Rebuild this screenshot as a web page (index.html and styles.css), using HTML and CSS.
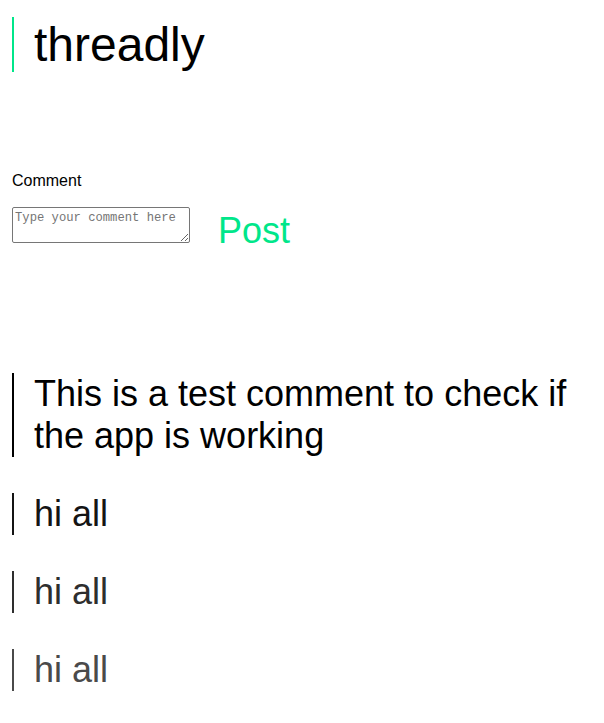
FILE: index.html
```html
<!DOCTYPE html>
<html lang="en">
<head>
<meta charset="utf-8">
<title>threadly</title>
<link rel="stylesheet" href="styles.css">
</head>
<body>
<div class="app">
  <h1 class="brand">threadly</h1>
  <form class="composer">
    <label class="composer-label" for="comment">Comment</label>
    <div class="composer-row">
      <textarea id="comment" class="composer-input" placeholder="Type your comment here"></textarea>
      <button type="button" class="composer-post">Post</button>
    </div>
  </form>
  <div class="comments">
    <p class="comment c1">This is a test comment to check if the app is working</p>
    <p class="comment c2">hi all</p>
    <p class="comment c3">hi all</p>
    <p class="comment c4">hi all</p>
  </div>
</div>
</body>
</html>
```

FILE: styles.css
```css
html, body {
  margin: 0;
  padding: 0;
  background: #ffffff;
}

body {
  font-family: "Liberation Sans", Arial, sans-serif;
  color: #000;
}

.app {
  padding: 0 12px;
}

.brand {
  margin: 17px 0 0;
  font-size: 48px;
  font-weight: 400;
  line-height: normal;
  border-left: 2px solid #00e68a;
  padding-left: 20px;
}

.composer {
  margin-top: 100px;
}

.composer-label {
  display: block;
  font-size: 16px;
  line-height: normal;
}

.composer-row {
  display: flex;
  align-items: flex-start;
  margin-top: 17px;
}

.composer-input {
  box-sizing: border-box;
  width: 178px;
  height: 36px;
  margin: 0;
  padding: 3px 2px 2px;
  border: 1px solid #767676;
  border-radius: 2px;
  font-family: "Liberation Mono", "Courier New", monospace;
  font-size: 12.2px;
  line-height: 14px;
}

.composer-input::placeholder {
  color: #757575;
}

.composer-post {
  margin: 3px 0 0 28px;
  padding: 0;
  border: none;
  background: none;
  color: #00e68a;
  font-family: "Liberation Sans", Arial, sans-serif;
  font-size: 36px;
  line-height: normal;
  cursor: pointer;
}

.comments {
  margin-top: 121px;
}

.comment {
  margin: 36px 0;
  font-size: 36px;
  line-height: normal;
  border-left: 2px solid currentColor;
  padding-left: 20px;
}

.c1 { color: #000000; }
.c2 { color: #141414; }
.c3 { color: #2e2e2e; }
.c4 { color: #4a4a4a; }
```
